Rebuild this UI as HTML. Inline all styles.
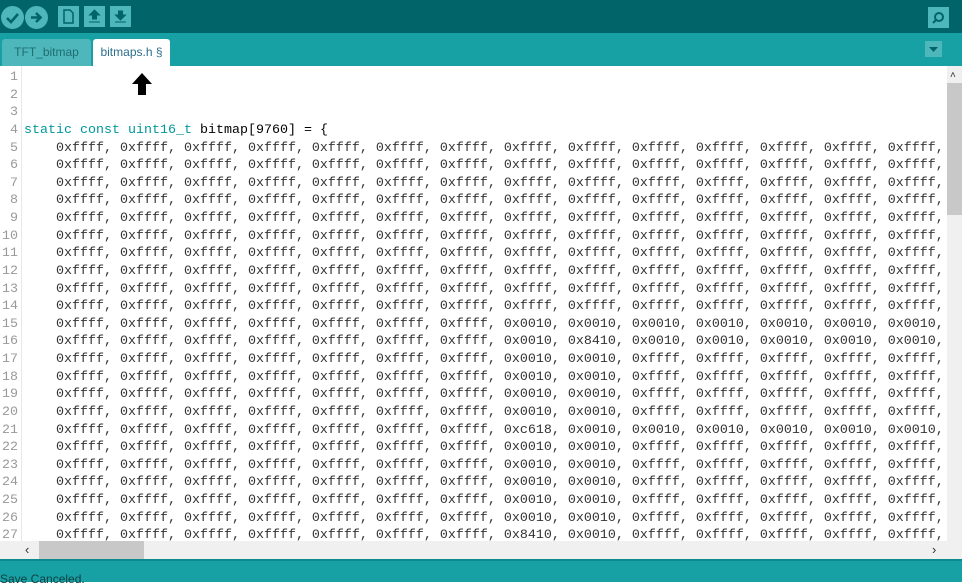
<!DOCTYPE html>
<html><head><style>
*{margin:0;padding:0;box-sizing:border-box}
body{width:962px;height:582px;overflow:hidden;background:#fff;font-family:"Liberation Sans",sans-serif;position:relative}
.tb{position:absolute;left:0;top:0;width:962px;height:33px;background:#006468}
.tabs{position:absolute;left:0;top:33px;width:962px;height:33px;background:#17a1a5}
.c{position:absolute;top:6px;width:23px;height:23px;border-radius:50%;background:#4db7bb}
.s{position:absolute;top:6px;width:21px;height:21px;background:#4db7bb}
.tab{position:absolute;top:39px;height:27px;font-size:12px;line-height:27px;text-align:center;border-radius:3px 3px 0 0}
.ed{position:absolute;left:0;top:66px;width:947px;height:475px;overflow:hidden;background:#fff}
.g{position:absolute;left:0;top:0;width:22px;height:475px;border-right:1px solid #e8e8e8}
pre{position:absolute;top:3px;font-family:"Liberation Mono",monospace;font-size:13.33px;line-height:17.62px}
.ln{left:0;width:18px;text-align:right;color:#999}
.code{left:24px;color:#333;white-space:pre}
.k{color:#00979c}
.vs{position:absolute;left:947px;top:66px;width:15px;height:475px;background:#f0f0f0}
.hs{position:absolute;left:0;top:541px;width:962px;height:18px;background:#f0f0f0}
.st{position:absolute;left:0;top:559px;width:962px;height:23px;background:#17a1a5;border-top:2px solid #0d8a8e}
</style></head><body>
<div class="tb">
<div class="c" style="left:1px"><svg width="23" height="23"><path d="M6 12l4 4 7-8" stroke="#006468" stroke-width="2.6" fill="none"/></svg></div>
<div class="c" style="left:25px"><svg width="23" height="23"><path d="M6 11.5h9M11 7l4.5 4.5L11 16" stroke="#006468" stroke-width="2.6" fill="none"/></svg></div>
<div class="s" style="left:58px"><svg width="21" height="21"><path d="M6 4h6l3 3v10H6z" fill="none" stroke="#006468" stroke-width="1.5"/></svg></div>
<div class="s" style="left:84px"><svg width="21" height="21"><path d="M10.5 4l5 5h-3v4h-4v-4h-3z M5 16h11" fill="#006468" stroke="#006468" stroke-width="1"/></svg></div>
<div class="s" style="left:110px"><svg width="21" height="21"><path d="M10.5 14l5-5h-3V5h-4v4h-3z M5 16h11" fill="#006468" stroke="#006468" stroke-width="1"/></svg></div>
<div class="s" style="left:928px;top:7px"><svg width="21" height="21"><circle cx="11" cy="10" r="4" fill="none" stroke="#006468" stroke-width="2"/><path d="M8 13l-3 3" stroke="#006468" stroke-width="2"/></svg></div>
</div>
<div class="tabs">
<div class="tab" style="left:2px;width:89px;top:6px;background:#4db7bb;color:#1f6e71">TFT_bitmap</div>
<div class="tab" style="left:93px;width:77px;top:6px;background:#fff;color:#2a6e8c">bitmaps.h §</div>
<div style="position:absolute;left:925px;top:8px;width:17px;height:16px;background:#4db7bb"><svg width="17" height="16"><path d="M4 6h9l-4.5 5z" fill="#006468"/></svg></div>
</div>
<div class="ed">
<div class="g"></div>
<pre class="ln">1
2
3
4
5
6
7
8
9
10
11
12
13
14
15
16
17
18
19
20
21
22
23
24
25
26
27</pre>
<pre class="code">&#8203;


<span class="k">static const uint16_t</span> <span style="color:#000">bitmap[9760] = {</span>
    0xffff, 0xffff, 0xffff, 0xffff, 0xffff, 0xffff, 0xffff, 0xffff, 0xffff, 0xffff, 0xffff, 0xffff, 0xffff, 0xffff,
    0xffff, 0xffff, 0xffff, 0xffff, 0xffff, 0xffff, 0xffff, 0xffff, 0xffff, 0xffff, 0xffff, 0xffff, 0xffff, 0xffff,
    0xffff, 0xffff, 0xffff, 0xffff, 0xffff, 0xffff, 0xffff, 0xffff, 0xffff, 0xffff, 0xffff, 0xffff, 0xffff, 0xffff,
    0xffff, 0xffff, 0xffff, 0xffff, 0xffff, 0xffff, 0xffff, 0xffff, 0xffff, 0xffff, 0xffff, 0xffff, 0xffff, 0xffff,
    0xffff, 0xffff, 0xffff, 0xffff, 0xffff, 0xffff, 0xffff, 0xffff, 0xffff, 0xffff, 0xffff, 0xffff, 0xffff, 0xffff,
    0xffff, 0xffff, 0xffff, 0xffff, 0xffff, 0xffff, 0xffff, 0xffff, 0xffff, 0xffff, 0xffff, 0xffff, 0xffff, 0xffff,
    0xffff, 0xffff, 0xffff, 0xffff, 0xffff, 0xffff, 0xffff, 0xffff, 0xffff, 0xffff, 0xffff, 0xffff, 0xffff, 0xffff,
    0xffff, 0xffff, 0xffff, 0xffff, 0xffff, 0xffff, 0xffff, 0xffff, 0xffff, 0xffff, 0xffff, 0xffff, 0xffff, 0xffff,
    0xffff, 0xffff, 0xffff, 0xffff, 0xffff, 0xffff, 0xffff, 0xffff, 0xffff, 0xffff, 0xffff, 0xffff, 0xffff, 0xffff,
    0xffff, 0xffff, 0xffff, 0xffff, 0xffff, 0xffff, 0xffff, 0xffff, 0xffff, 0xffff, 0xffff, 0xffff, 0xffff, 0xffff,
    0xffff, 0xffff, 0xffff, 0xffff, 0xffff, 0xffff, 0xffff, 0x0010, 0x0010, 0x0010, 0x0010, 0x0010, 0x0010, 0x0010,
    0xffff, 0xffff, 0xffff, 0xffff, 0xffff, 0xffff, 0xffff, 0x0010, 0x8410, 0x0010, 0x0010, 0x0010, 0x0010, 0x0010,
    0xffff, 0xffff, 0xffff, 0xffff, 0xffff, 0xffff, 0xffff, 0x0010, 0x0010, 0xffff, 0xffff, 0xffff, 0xffff, 0xffff,
    0xffff, 0xffff, 0xffff, 0xffff, 0xffff, 0xffff, 0xffff, 0x0010, 0x0010, 0xffff, 0xffff, 0xffff, 0xffff, 0xffff,
    0xffff, 0xffff, 0xffff, 0xffff, 0xffff, 0xffff, 0xffff, 0x0010, 0x0010, 0xffff, 0xffff, 0xffff, 0xffff, 0xffff,
    0xffff, 0xffff, 0xffff, 0xffff, 0xffff, 0xffff, 0xffff, 0x0010, 0x0010, 0xffff, 0xffff, 0xffff, 0xffff, 0xffff,
    0xffff, 0xffff, 0xffff, 0xffff, 0xffff, 0xffff, 0xffff, 0xc618, 0x0010, 0x0010, 0x0010, 0x0010, 0x0010, 0x0010,
    0xffff, 0xffff, 0xffff, 0xffff, 0xffff, 0xffff, 0xffff, 0x0010, 0x0010, 0xffff, 0xffff, 0xffff, 0xffff, 0xffff,
    0xffff, 0xffff, 0xffff, 0xffff, 0xffff, 0xffff, 0xffff, 0x0010, 0x0010, 0xffff, 0xffff, 0xffff, 0xffff, 0xffff,
    0xffff, 0xffff, 0xffff, 0xffff, 0xffff, 0xffff, 0xffff, 0x0010, 0x0010, 0xffff, 0xffff, 0xffff, 0xffff, 0xffff,
    0xffff, 0xffff, 0xffff, 0xffff, 0xffff, 0xffff, 0xffff, 0x0010, 0x0010, 0xffff, 0xffff, 0xffff, 0xffff, 0xffff,
    0xffff, 0xffff, 0xffff, 0xffff, 0xffff, 0xffff, 0xffff, 0x0010, 0x0010, 0xffff, 0xffff, 0xffff, 0xffff, 0xffff,
    0xffff, 0xffff, 0xffff, 0xffff, 0xffff, 0xffff, 0xffff, 0x8410, 0x0010, 0xffff, 0xffff, 0xffff, 0xffff, 0xffff,</pre>
<svg style="position:absolute;left:132px;top:7px" width="20" height="23"><path d="M10 0L20 11H14V22H6V11H0z" fill="#000"/></svg>
</div>
<div class="vs"><div style="position:absolute;left:0;top:17px;width:15px;height:132px;background:#c8c8c8"></div>
<div style="position:absolute;left:3px;top:4px;font-size:10px;color:#333">&#x2C4;</div></div>
<div class="hs"><div style="position:absolute;left:39px;top:0;width:105px;height:18px;background:#c8c8c8"></div>
<div style="position:absolute;left:25px;top:1px;font-size:13px;color:#333">‹</div>
<div style="position:absolute;left:932px;top:1px;font-size:13px;color:#333">›</div></div>
<div class="st"><div style="position:absolute;left:0;top:11px;font-size:12px;color:#0d3f41">Save Canceled.</div></div>
</body></html>
